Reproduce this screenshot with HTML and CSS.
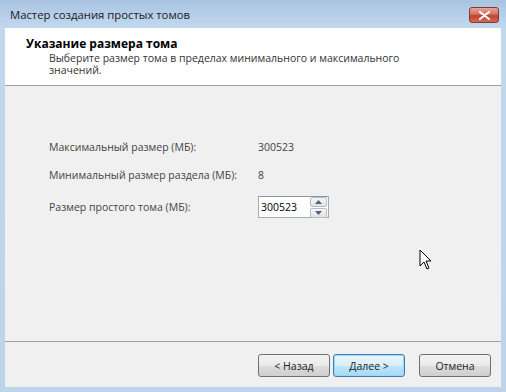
FILE: index.html
```html
<!DOCTYPE html>
<html lang="ru">
<head>
<meta charset="UTF-8" />
<title>Мастер создания простых томов</title>
<link rel="stylesheet" href="styles.css">
</head>
<body>

<div class="window">
  <div class="titlebar">
    <span class="title">Мастер создания простых томов</span>
    <button class="close">
      <svg width="13" height="9" viewBox="0 0 13 9"><path d="M2 1 L11 8 M11 1 L2 8" stroke="#fff" stroke-width="2.2" stroke-linecap="round"/></svg>
    </button>
  </div>

  <div class="client">
    <div class="header">
      <h3>Указание размера тома</h3>
      <p>Выберите размер тома в пределах минимального и максимального значений.</p>
    </div>

    <div class="content">
      <div class="row">
        <span class="label">Максимальный размер (МБ):</span>
        <span class="value">300523</span>
      </div>
      <div class="row">
        <span class="label">Минимальный размер раздела (МБ):</span>
        <span class="value">8</span>
      </div>
      <div class="row spin-row">
        <span class="label">Размер простого тома (МБ):</span>
        <div class="spin">
          <span class="spin-text">300523</span>
          <div class="spin-btns">
            <span class="arrow"><svg width="7" height="4" viewBox="0 0 7 4"><path d="M0 4 L3.5 0 L7 4Z" fill="#4d6185"/></svg></span>
            <span class="arrow"><svg width="7" height="4" viewBox="0 0 7 4"><path d="M0 0 L3.5 4 L7 0Z" fill="#4d6185"/></svg></span>
          </div>
        </div>
      </div>
      <svg class="cursor" width="14" height="22" viewBox="0 0 14 22"><path d="M1 1 L1 17 L5 13 L8 20 L10 19 L7 12 L12 12 Z" fill="#fff" stroke="#000" stroke-width="1"/></svg>
    </div>

    <div class="footer">
      <button class="btn">&lt; Назад</button>
      <button class="btn default">Далее &gt;</button>
      <button class="btn cancel">Отмена</button>
    </div>
  </div>
</div>

</body>
</html>
```
FILE: styles.css
```css
body {
  margin: 0;
  font-family: "Open Sans", "Noto Sans", sans-serif;
  font-size: 10.5px;
  color: #1e1e1e;
}
.window {
  width: 506px;
  height: 392px;
  background: linear-gradient(to bottom, #a9c4e2 0, #c2d8ef 28px, #bcd3ec 100%);
  padding: 0 5px 5px 5px;
  box-sizing: border-box;
  display: flex;
  flex-direction: column;
}
.titlebar {
  height: 28px;
  display: flex;
  align-items: center;
  justify-content: space-between;
}
.title {
  padding-left: 5px;
  font-size: 11.3px;
  color: #1a1a1a;
}
.close {
  width: 30px;
  height: 16px;
  margin-right: 2px;
  align-self: flex-start;
  margin-top: 7px;
  border: 1px solid #7e3a34;
  border-radius: 3px;
  background: linear-gradient(to bottom, #e8a59a 0, #d2705f 45%, #c2412e 55%, #d56b50 100%);
  display: flex;
  align-items: center;
  justify-content: center;
  padding: 0;
}
.client {
  flex: 1;
  background: #f0f0f0;
  display: flex;
  flex-direction: column;
}
.header {
  background: #fff;
  height: 58px;
  border-bottom: 1px solid #a0a0a0;
  padding: 8px 80px 0 21px;
  box-sizing: border-box;
}
.header h3 {
  margin: 0;
  font-size: 12px;
  font-weight: bold;
  color: #000;
  line-height: 16px;
}
.header p {
  margin: 0 0 0 23px;
  line-height: 12px;
  color: #333;
}
.content {
  flex: 1;
  padding: 47px 0 0 44px;
  position: relative;
}
.row {
  display: flex;
  align-items: center;
  height: 28px;
  color: #444;
}
.spin-row {
  margin-top: 4px;
}
.label {
  width: 209px;
}
.spin {
  display: flex;
  align-items: center;
  width: 71px;
  height: 22px;
  box-sizing: border-box;
  border: 1px solid #a5acb5;
  border-top-color: #8d96a3;
  background: #fff;
}
.spin-text {
  flex: 1;
  padding-left: 2px;
  color: #000;
}
.spin-btns {
  display: flex;
  flex-direction: column;
  gap: 1px;
  padding-right: 1px;
}
.arrow {
  width: 15px;
  height: 8px;
  border: 1px solid #b8bec6;
  border-radius: 2px;
  background: linear-gradient(to bottom, #f7f7f7, #e2e2e2);
  display: flex;
  align-items: center;
  justify-content: center;
}
.cursor {
  position: absolute;
  left: 414px;
  top: 163px;
}
.footer {
  height: 46px;
  border-top: 1px solid #a0a0a0;
  display: flex;
  align-items: center;
  padding: 0 10px 0 253px;
  box-sizing: border-box;
  gap: 3px;
}
.btn {
  width: 72px;
  height: 23px;
  border: 1px solid #707070;
  border-radius: 3px;
  background: linear-gradient(to bottom, #f2f2f2 0, #ebebeb 50%, #dddddd 51%, #cfcfcf 100%);
  font-family: inherit;
  font-size: 10.5px;
  color: #222;
  padding: 0;
  margin-top: 2px;
}
.btn.default {
  border-color: #3c7fb1;
  background: linear-gradient(to bottom, #eaf6fd 0, #d9f0fc 50%, #bee6fd 51%, #a7d9f5 100%);
  box-shadow: inset 0 0 0 1px #9fd6f5;
}
.btn.cancel {
  margin-left: 11px;
}
```
